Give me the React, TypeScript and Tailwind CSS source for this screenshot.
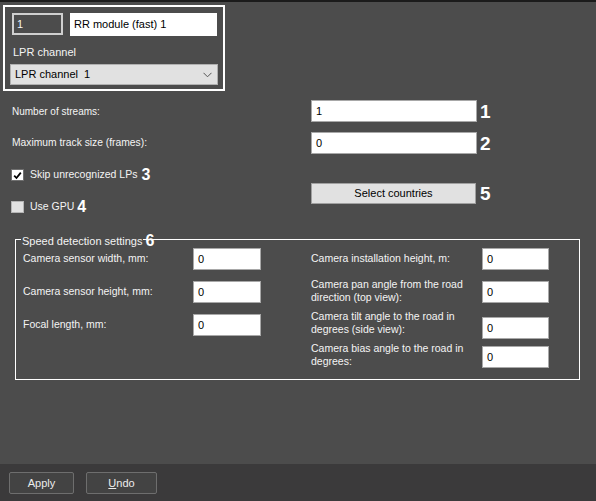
import React from 'react';

const FONT = "font-['Liberation_Sans',Arial,sans-serif]";

function TextBox({ value, className = '' }: { value: string; className?: string }) {
    return (
        <div className={`bg-white border border-[#a8a8a8] text-black flex items-center pl-[4px] text-[11px] ${className}`}>
            {value}
        </div>
    );
}

function Mark({ n, className = '' }: { n: string; className?: string }) {
    return <span className={`font-bold text-white leading-none ${className}`}>{n}</span>;
}

function CheckBox({ checked }: { checked?: boolean }) {
    return (
        <div
            className={`w-[13px] h-[12px] border flex items-center justify-center ${
                checked ? 'bg-white border-[#707070]' : 'bg-[#e2e2e2] border-[#b5b5b5]'
            }`}
        >
            {checked && (
                <svg width="9" height="9" viewBox="0 0 9 9">
                    <path d="M1.2 4.6 L3.5 7 L7.8 1.6" fill="none" stroke="#000" strokeWidth="1.8" />
                </svg>
            )}
        </div>
    );
}

export default function App() {
    const leftRows = ['Camera sensor width, mm:', 'Camera sensor height, mm:', 'Focal length, mm:'];

    return (
        <div className={`w-[596px] h-[501px] bg-[#4c4c4c] flex flex-col text-[10px] text-[#f4f4f4] ${FONT}`}>
            <div className="h-[2px] bg-[#1b1b1b]" />

            <div className="flex-1 flex flex-col">
                {/* channel frame */}
                <div className="ml-[3px] mt-[3px] w-[222px] h-[86px] border-2 border-white pl-[5px] pt-[6px]">
                    <div className="flex">
                        <div className="ml-[2px] w-[51px] h-[22px] border-2 border-[#cfcfcf] flex items-center pl-[3px] text-[11px]">
                            1
                        </div>
                        <div className="ml-[7px] w-[147px] h-[23px] bg-white text-black text-[11px] flex items-center pl-[4px]">
                            RR module (fast) 1
                        </div>
                    </div>
                    <div className="mt-[10px] pl-[3px] text-[11px] leading-[12px]">LPR channel</div>
                    <div className="mt-[6px] w-[208px] h-[21px] bg-[#e1e1e1] border border-[#b0b0b0] text-black text-[11px] flex items-center justify-between pl-[4px] pr-[5px]">
                        <span>LPR channel&nbsp; 1</span>
                        <svg width="9" height="6" viewBox="0 0 9 6">
                            <path d="M0.5 0.8 L4.5 4.8 L8.5 0.8" fill="none" stroke="#555" strokeWidth="1" />
                        </svg>
                    </div>
                </div>

                {/* streams */}
                <div className="mt-[9px] h-[22px] flex items-center">
                    <div className="w-[311px] pl-[12px]">Number of streams:</div>
                    <TextBox value="1" className="w-[166px] h-[22px]" />
                    <Mark n="1" className="ml-[3px] text-[19px]" />
                </div>
                <div className="mt-[10px] h-[22px] flex items-center">
                    <div className="w-[311px] pl-[12px] text-[10.3px]">Maximum track size (frames):</div>
                    <TextBox value="0" className="w-[166px] h-[22px]" />
                    <Mark n="2" className="ml-[3px] text-[19px]" />
                </div>

                <div className="flex">
                    <div className="w-[311px] pl-[11px] flex flex-col">
                        <div className="mt-[15px] h-[12px] flex items-center">
                            <CheckBox checked />
                            <span className="ml-[6px] text-[10.5px]">Skip unrecognized LPs</span>
                            <Mark n="3" className="ml-[4px] text-[16px]" />
                        </div>
                        <div className="mt-[20px] h-[12px] flex items-center">
                            <CheckBox />
                            <span className="ml-[6px] text-[10.5px]">Use GPU</span>
                            <Mark n="4" className="ml-[3px] text-[16px]" />
                        </div>
                    </div>
                    <div className="mt-[29px] h-[21px] flex items-center">
                        <div className="w-[165px] h-[21px] bg-[#e1e1e1] border border-[#a0a0a0] text-black text-[11px] flex items-center justify-center">
                            Select countries
                        </div>
                        <Mark n="5" className="ml-[4px] text-[19px]" />
                    </div>
                </div>

                {/* speed detection group */}
                <div className="relative mt-[26px] ml-[15px] w-[565px] h-[141px] border border-white pt-[8px] pl-[6px] flex text-[10.5px]">
                    <div className="absolute -top-[7px] left-[5px] flex items-center">
                        <span className="bg-[#4c4c4c] px-[1px] text-[11px] leading-[13px]">Speed detection settings</span>
                        <Mark n="6" className="ml-[2px] text-[16px]" />
                    </div>

                    <div className="w-[289px] flex flex-col gap-[11px]">
                        {leftRows.map((label) => (
                            <div key={label} className="h-[22px] flex items-center">
                                <div className="w-[171px] pl-[1px]">{label}</div>
                                <TextBox value="0" className="w-[68px] h-[22px]" />
                            </div>
                        ))}
                    </div>

                    <div className="flex flex-col">
                        <div className="h-[22px] flex items-center">
                            <div className="w-[171px]">Camera installation height, m:</div>
                            <TextBox value="0" className="w-[67px] h-[22px]" />
                        </div>
                        <div className="mt-[8px] flex items-start">
                            <div className="w-[171px] leading-[13px]">
                                Camera pan angle from the road
                                <br />
                                direction (top view):
                            </div>
                            <TextBox value="0" className="mt-[3px] w-[67px] h-[22px]" />
                        </div>
                        <div className="mt-[6px] flex items-start">
                            <div className="w-[171px] leading-[13px]">
                                Camera tilt angle to the road in
                                <br />
                                degrees (side view):
                            </div>
                            <TextBox value="0" className="mt-[7px] w-[67px] h-[22px]" />
                        </div>
                        <div className="mt-[3px] flex items-start">
                            <div className="w-[171px] leading-[13px]">
                                Camera bias angle to the road in
                                <br />
                                degrees:
                            </div>
                            <TextBox value="0" className="mt-[4px] w-[67px] h-[22px]" />
                        </div>
                    </div>
                </div>
            </div>

            {/* footer */}
            <div className="h-[37px] bg-[#3b3a3b] flex items-start pt-[8px] pl-[9px] gap-[12px]">
                <button className="w-[65px] h-[22px] bg-[#434343] border border-[#6e6e6e] rounded-[2px] text-[11px] text-[#ececec]">
                    Apply
                </button>
                <button className="w-[71px] h-[22px] bg-[#434343] border border-[#6e6e6e] rounded-[2px] text-[11px] text-[#ececec]">
                    <span className="underline">U</span>ndo
                </button>
            </div>
        </div>
    );
}
